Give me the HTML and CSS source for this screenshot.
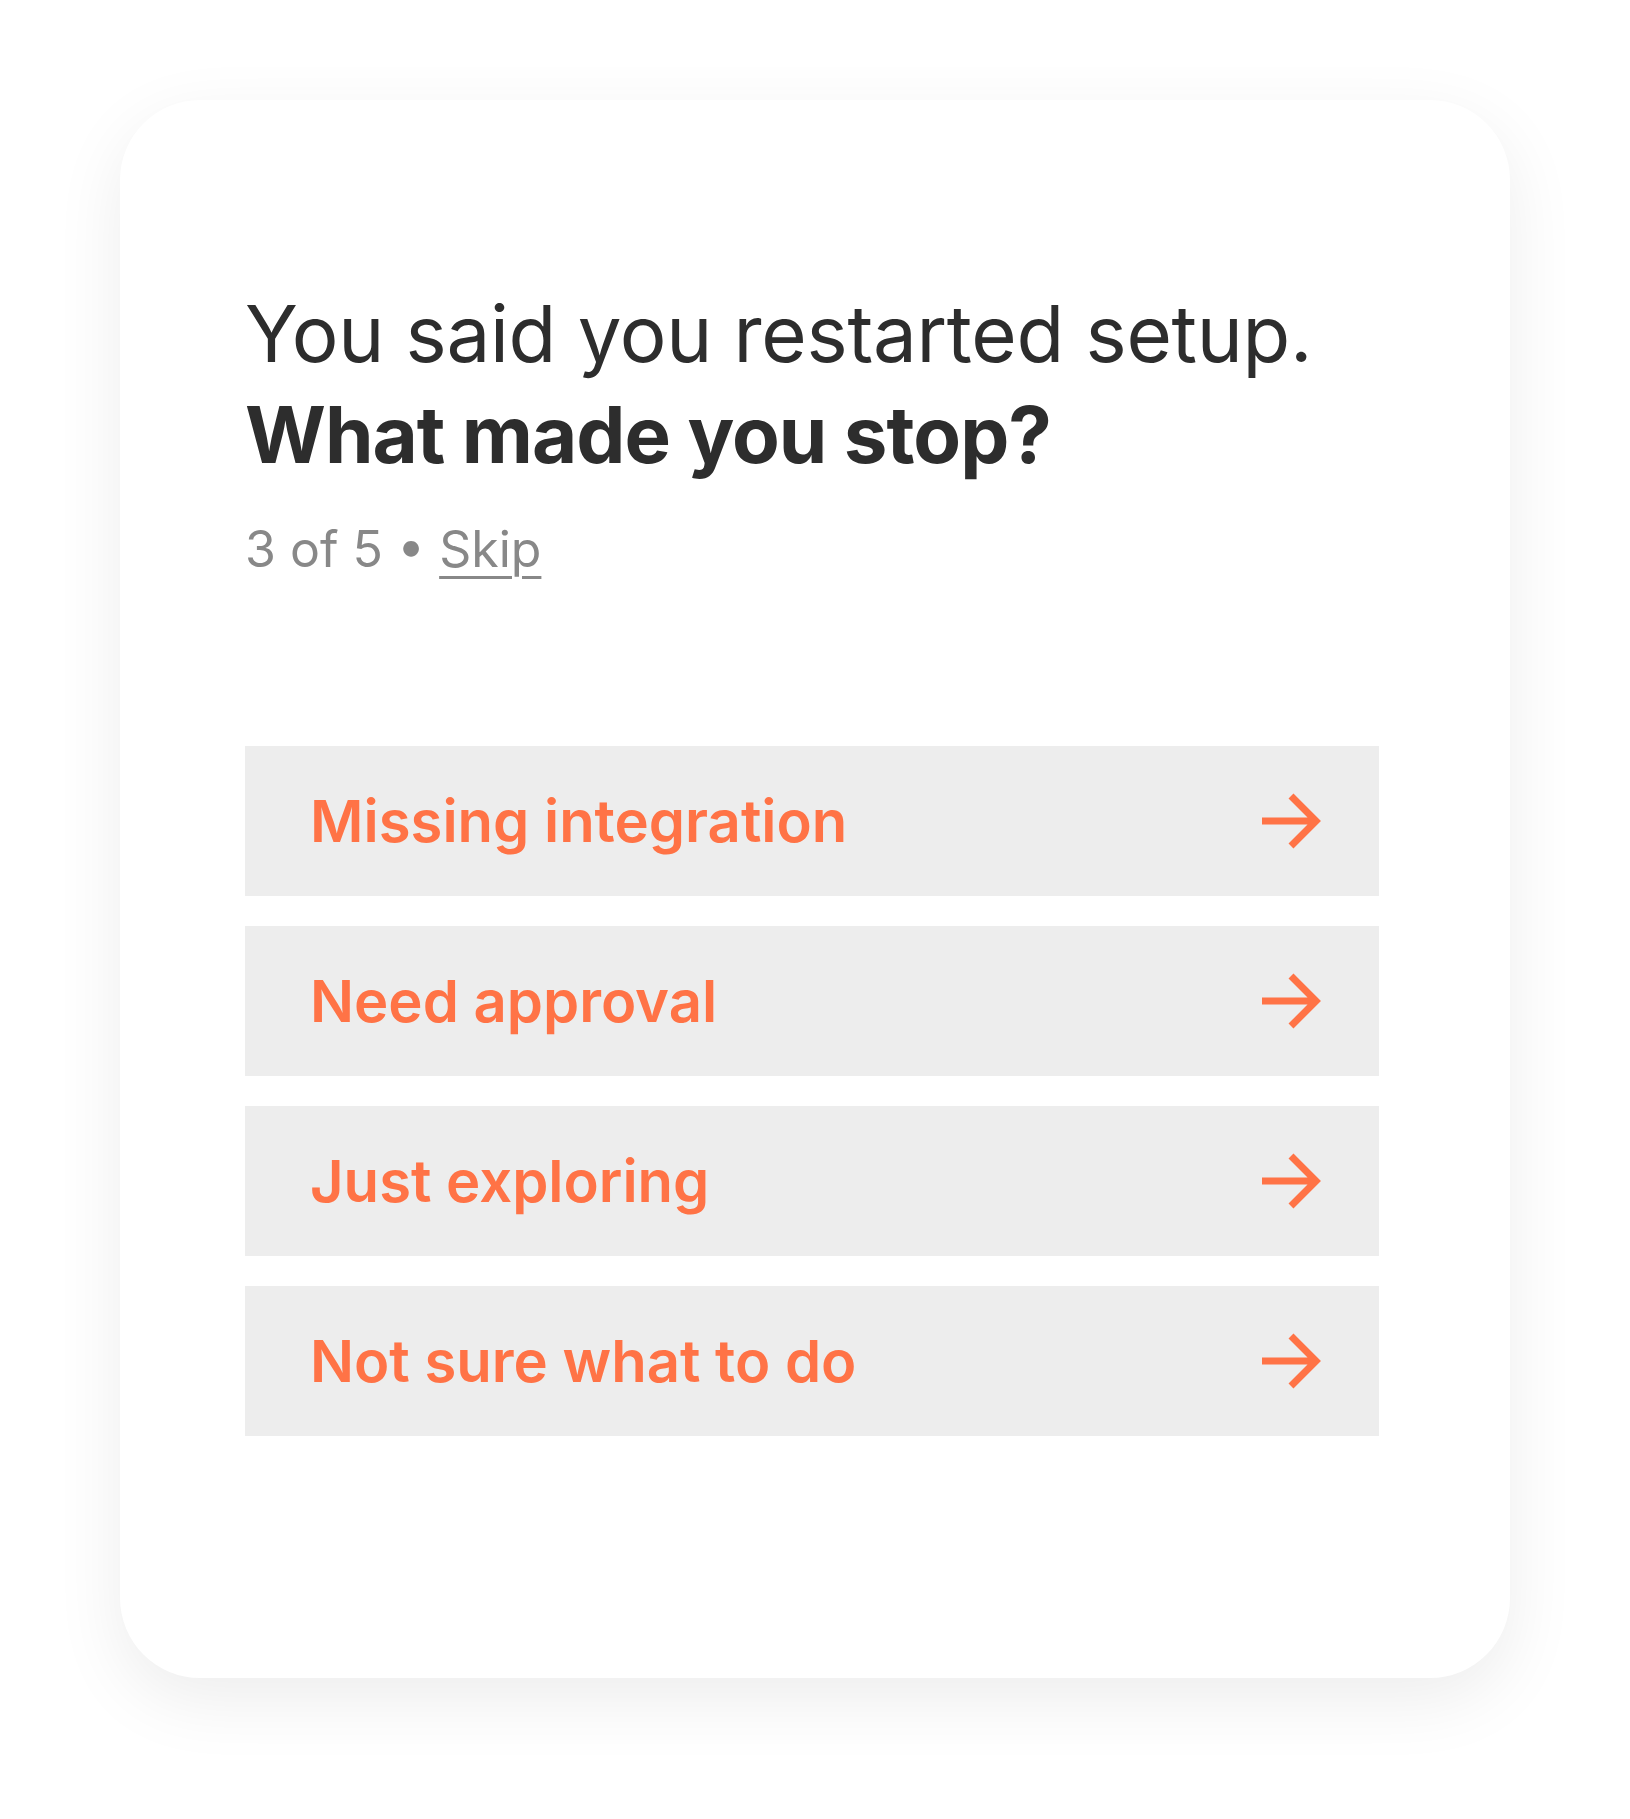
FILE: index.html
```html
<!DOCTYPE html>
<html lang="en">
<head>
<meta charset="utf-8">
<title>Survey</title>
<link rel="stylesheet" href="styles.css">
</head>
<body>
<main class="card">
  <h1 class="question">
    <span class="lead">You said you restarted setup.</span>
    <span class="ask">What made you stop?</span>
  </h1>
  <p class="meta">3 of 5 • <a class="skip" href="#">Skip</a></p>
  <ul class="options">
    <li><button class="option"><span class="label">Missing integration</span><svg class="arrow" viewBox="0 0 64 64"><path d="M2 32H56M31 7L56 32L31 57"/></svg></button></li>
    <li><button class="option"><span class="label">Need approval</span><svg class="arrow" viewBox="0 0 64 64"><path d="M2 32H56M31 7L56 32L31 57"/></svg></button></li>
    <li><button class="option"><span class="label">Just exploring</span><svg class="arrow" viewBox="0 0 64 64"><path d="M2 32H56M31 7L56 32L31 57"/></svg></button></li>
    <li><button class="option"><span class="label">Not sure what to do</span><svg class="arrow" viewBox="0 0 64 64"><path d="M2 32H56M31 7L56 32L31 57"/></svg></button></li>
  </ul>
</main>
</body>
</html>
```
FILE: styles.css
```css
html, body {
  margin: 0;
  background: #ffffff;
}
body {
  padding: 100px 120px 141px;
  font-family: Inter, "Noto Sans", "Liberation Sans", sans-serif;
  color: #2d2d2d;
}
.card {
  background: #ffffff;
  border-radius: 80px;
  box-shadow: 0 22px 70px rgba(0, 0, 0, 0.075);
  padding: 183px 131px 242px 125px;
}
.question {
  margin: 0;
  font-size: 78px;
  line-height: 101px;
  font-weight: 400;
  color: #2d2d2d;
}
.question span {
  display: block;
}
.question .lead {
  letter-spacing: -0.3px;
}
.question .ask {
  font-weight: 700;
  letter-spacing: -1px;
}
.meta {
  margin: 30px 0 0;
  font-size: 50px;
  line-height: 68px;
  color: #888888;
}
.skip {
  color: #888888;
  text-decoration: underline;
  text-decoration-thickness: 3px;
  text-underline-offset: 9px;
}
.options {
  list-style: none;
  margin: 163px 0 0;
  padding: 0;
  display: flex;
  flex-direction: column;
  gap: 30px;
}
.option {
  display: flex;
  align-items: center;
  justify-content: space-between;
  width: 100%;
  height: 150px;
  box-sizing: border-box;
  padding: 0 55px 0 65px;
  border: 0;
  background: #ededed;
  font-family: inherit;
  font-size: 58px;
  font-weight: 600;
  color: #ff7346;
  cursor: pointer;
  text-align: left;
}
.arrow {
  width: 64px;
  height: 64px;
  flex: none;
}
.arrow path {
  fill: none;
  stroke: #ff7346;
  stroke-width: 7;
  stroke-linejoin: miter;
  stroke-linecap: butt;
}
```
